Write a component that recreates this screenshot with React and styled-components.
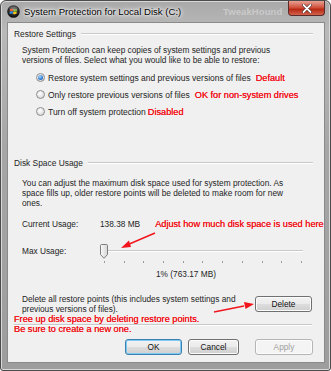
import React from "react";
import styled, { createGlobalStyle } from "styled-components";

const Global = createGlobalStyle`
  html, body { margin: 0; padding: 0; background: #ffffff; }
  body { width: 331px; height: 371px; overflow: hidden; }
  * { box-sizing: border-box; }
`;

const UI_FONT = `"Liberation Sans", Arial, sans-serif`;
const RED_FONT = `"Liberation Sans", Arial, sans-serif`;

const Window = styled.div`
  position: relative;
  width: 331px;
  height: 371px;
  display: flex;
  flex-direction: column;
  border: 1px solid #4b4b4b;
  border-radius: 6px 6px 3px 3px;
  background: linear-gradient(180deg, #a9a9a9 0%, #b9b9b9 8%, #a6a6a6 40%, #9d9d9d 100%);
  box-shadow: inset 0 0 0 1px #d9d9d9;
  font-family: ${UI_FONT};
  color: #1e1e1e;
`;

const TitleBar = styled.div`
  position: relative;
  height: 21px;
  flex: none;
  display: flex;
  align-items: center;
  padding: 0 0 0 6px;
  gap: 4px;
`;

const TitleText = styled.span`
  font-size: 9.6px;
  color: #000;
  text-shadow: 0 0 6px #ffffff, 0 0 4px #ffffff, 0 0 2px #ffffff;
  white-space: nowrap;
`;

const Watermark = styled.span`
  position: absolute;
  left: 222px;
  top: 5px;
  font-size: 9.5px;
  line-height: 11px;
  font-weight: bold;
  color: #cacaca;
  letter-spacing: 0.1px;
`;

const CloseButton = styled.div`
  position: absolute;
  top: 0;
  right: 5px;
  width: 37px;
  height: 15px;
  border: 1px solid #5a2b2b;
  border-top: none;
  border-radius: 0 0 4px 4px;
  background: linear-gradient(180deg, #e8a194 0%, #d2543f 45%, #b92a14 60%, #d2634d 100%);
  display: flex;
  align-items: center;
  justify-content: center;
`;

const Client = styled.div`
  flex: 1;
  margin: 0 5px 7px 6px;
  border: 1px solid #8a8a8a;
  background: #f0f0f0;
  display: flex;
  flex-direction: column;
  position: relative;
`;

const SectionHeader = styled.div`
  display: flex;
  align-items: center;
  height: 12px;
  margin: ${(p) => p.$mt}px 11px 0 6px;
  font-size: 8.4px;
  gap: 5px;
  white-space: nowrap;
  &::after {
    content: "";
    flex: 1;
    height: 1px;
    background: #c9c9c9;
    border-bottom: 1px solid #ffffff;
  }
`;

const Para = styled.p`
  margin: ${(p) => p.$mt}px 35px 0 14px;
  font-size: 8.3px;
  line-height: 10px;
`;

const RadioList = styled.div`
  display: flex;
  flex-direction: column;
  margin: 4px 0 0 28px;
`;

const RadioRow = styled.label`
  display: flex;
  align-items: center;
  height: 17px;
  font-size: 8.5px;
  white-space: nowrap;
`;

const RadioDot = styled.span`
  width: 9px;
  height: 9px;
  border-radius: 50%;
  border: 1px solid #8d8d8d;
  background: radial-gradient(circle at 40% 35%, #ffffff 0%, #e2e2e2 60%, #c9c9c9 100%);
  display: flex;
  align-items: center;
  justify-content: center;
  margin-right: 3px;
  flex: none;
  &::after {
    content: "";
    width: 5px;
    height: 5px;
    border-radius: 50%;
    background: ${(p) =>
      p.$checked ? "radial-gradient(circle at 40% 35%, #a8d8ff 0%, #2e7bd0 60%, #10407a 100%)" : "transparent"};
  }
`;

const RedNote = styled.span`
  color: #f2141c;
  font-family: ${RED_FONT};
  font-size: 9.2px;
  text-shadow: 0 0 0.3px #f2141c;
  margin-left: ${(p) => p.$ml || 4}px;
`;

const UsageRow = styled.div`
  display: flex;
  align-items: center;
  height: 12px;
  margin: ${(p) => p.$mt}px 0 0 14px;
  font-size: 8.3px;
  white-space: nowrap;
`;

const UsageLabel = styled.span`
  width: 78px;
  flex: none;
`;

const SliderRow = styled.div`
  display: flex;
  align-items: center;
  height: 16px;
  margin: ${(p) => p.$mt}px 0 0 14px;
  font-size: 8.3px;
`;

const SliderTrack = styled.div`
  position: relative;
  width: 203px;
  height: 16px;
  display: flex;
  align-items: center;
  &::before {
    content: "";
    position: absolute;
    left: 3px;
    right: 0;
    top: 7px;
    height: 1px;
    background: #c8c8c8;
    border-bottom: 1px solid #ffffff;
  }
`;

const Thumb = styled.svg`
  position: relative;
  z-index: 1;
  flex: none;
`;

const Ticks = styled.div`
  display: flex;
  justify-content: space-between;
  width: 198px;
  height: 4px;
  margin: 2px 0 0 96px;
  & > span {
    width: 1px;
    height: 2px;
    background: #9c9c9c;
  }
`;

const Centered = styled.div`
  height: 12px;
  line-height: 12px;
  font-size: 8.3px;
  margin: ${(p) => p.$mt}px 0 0 148px;
`;

const DeleteRow = styled.div`
  display: flex;
  align-items: center;
  justify-content: space-between;
  margin: ${(p) => p.$mt}px 12px 0 14px;
`;

const DeleteText = styled.div`
  font-size: 8.3px;
  line-height: 10px;
  width: 225px;
`;

const Button = styled.div`
  width: ${(p) => p.$w || 57}px;
  height: 16px;
  flex: none;
  border: 1px solid ${(p) => (p.$disabled ? "#b5b5b5" : p.$default ? "#3c7fb1" : "#707070")};
  border-radius: 3px;
  background: ${(p) =>
    p.$disabled ? "#f4f4f4" : "linear-gradient(180deg, #f2f2f2 0%, #ebebeb 48%, #dddddd 52%, #cfcfcf 100%)"};
  box-shadow: ${(p) => (p.$default ? "inset 0 0 0 1px #7ecbf1" : "inset 0 0 0 1px #fcfcfc")};
  color: ${(p) => (p.$disabled ? "#a0a0a0" : "#111")};
  font-size: 8.3px;
  display: flex;
  align-items: center;
  justify-content: center;
`;

const RedBlock = styled.div`
  color: #f2141c;
  font-family: ${RED_FONT};
  font-size: 9.2px;
  line-height: 10px;
  text-shadow: 0 0 0.3px #f2141c;
  margin: ${(p) => p.$mt}px 0 0 6px;
  white-space: nowrap;
`;

const Separator = styled.div`
  height: 2px;
  margin: 0 12px 0 6px;
  border-top: 1px solid #c9c9c9;
  border-bottom: 1px solid #ffffff;
`;

const ButtonBar = styled.div`
  display: flex;
  gap: 6px;
  margin: ${(p) => p.$mt}px 12px 0 117px;
  & > :last-child { margin-left: 10px; }
`;

const Overlay = styled.svg`
  position: absolute;
  left: 0;
  top: 0;
  pointer-events: none;
`;

function WinOrb() {
  return (
    <svg width="13" height="13" viewBox="0 0 13 13">
      <defs>
        <radialGradient id="orb" cx="50%" cy="35%" r="60%">
          <stop offset="0%" stopColor="#6a6a6a" />
          <stop offset="100%" stopColor="#0c0c0c" />
        </radialGradient>
      </defs>
      <circle cx="6.5" cy="6.5" r="6.3" fill="url(#orb)" />
      <path d="M3 4.2 Q4.6 3.4 6.2 4 L6 6.2 Q4.4 5.6 2.8 6.4 Z" fill="#f04a1c" />
      <path d="M6.6 4.1 Q8.2 4.8 10 3.9 L9.8 6.2 Q8 7 6.4 6.3 Z" fill="#7cc43a" />
      <path d="M2.7 6.8 Q4.3 6 5.9 6.6 L5.7 8.8 Q4.1 8.2 2.5 9 Z" fill="#2c8fe0" />
      <path d="M6.3 6.7 Q7.9 7.4 9.7 6.5 L9.5 8.8 Q7.7 9.6 6.1 8.9 Z" fill="#f7c51c" />
      <ellipse cx="6.5" cy="3.6" rx="4" ry="2.2" fill="#ffffff" opacity="0.18" />
    </svg>
  );
}

export default function App() {
  const ticks = Array.from({ length: 11 });
  return (
    <>
      <Global />
      <Window>
        <TitleBar>
          <WinOrb />
          <TitleText>System Protection for Local Disk (C:)</TitleText>
          <Watermark>TweakHound</Watermark>
          <CloseButton>
            <svg width="10" height="9" viewBox="0 0 10 9">
              <path d="M1.5 1 L8.5 8 M8.5 1 L1.5 8" stroke="#3a1a1a" strokeWidth="3" strokeLinecap="round" />
              <path d="M1.5 1 L8.5 8 M8.5 1 L1.5 8" stroke="#ffffff" strokeWidth="1.8" strokeLinecap="round" />
            </svg>
          </CloseButton>
        </TitleBar>
        <Client>
          <SectionHeader $mt={5}>Restore Settings</SectionHeader>
          <Para $mt={5}>
            System Protection can keep copies of system settings and previous versions of files. Select what you would like to be able to restore:
          </Para>
          <RadioList>
            <RadioRow>
              <RadioDot $checked />
              Restore system settings and previous versions of files
              <RedNote $ml={5}>Default</RedNote>
            </RadioRow>
            <RadioRow>
              <RadioDot />
              Only restore previous versions of files
              <RedNote $ml={5}>OK for non-system drives</RedNote>
            </RadioRow>
            <RadioRow>
              <RadioDot />
              Turn off system protection
              <RedNote $ml={2}>Disabled</RedNote>
            </RadioRow>
          </RadioList>
          <SectionHeader $mt={37}>Disk Space Usage</SectionHeader>
          <Para $mt={9}>
            You can adjust the maximum disk space used for system protection. As space fills up, older restore points will be deleted to make room for new ones.
          </Para>
          <UsageRow $mt={10}>
            <UsageLabel>Current Usage:</UsageLabel>
            138.38 MB
            <RedNote $ml={15}>Adjust how much disk space is used here</RedNote>
          </UsageRow>
          <SliderRow $mt={13}>
            <UsageLabel>Max Usage:</UsageLabel>
            <SliderTrack>
              <Thumb width="8" height="15" viewBox="0 0 8 15">
                <defs>
                  <linearGradient id="th" x1="0" x2="1">
                    <stop offset="0%" stopColor="#fafafa" />
                    <stop offset="100%" stopColor="#d6d6d6" />
                  </linearGradient>
                </defs>
                <path d="M0.5 1.5 Q0.5 0.5 1.5 0.5 L6.5 0.5 Q7.5 0.5 7.5 1.5 L7.5 10.5 L4 14.3 L0.5 10.5 Z" fill="url(#th)" stroke="#7d7d7d" />
              </Thumb>
            </SliderTrack>
          </SliderRow>
          <Ticks>
            {ticks.map((_, i) => (
              <span key={i} />
            ))}
          </Ticks>
          <Centered $mt={3}>1% (763.17 MB)</Centered>
          <DeleteRow $mt={14}>
            <DeleteText>
              Delete all restore points (this includes system settings and previous versions of files).
            </DeleteText>
            <Button>Delete</Button>
          </DeleteRow>
          <RedBlock $mt={0}>Free up disk space by deleting restore points.</RedBlock>
          <Separator />
          <RedBlock $mt={-2}>Be sure to create a new one.</RedBlock>
          <ButtonBar $mt={5}>
            <Button $default>OK</Button>
            <Button $w={51}>Cancel</Button>
            <Button $w={58} $disabled>Apply</Button>
          </ButtonBar>
          <Overlay width="318" height="340" viewBox="0 0 318 340">
            <path d="M147 210 L119 222" stroke="#f2141c" strokeWidth="1.4" />
            <path d="M113 225 L121 217.5 L123 224 Z" fill="#f2141c" />
            <path d="M206 289 L236 283" stroke="#f2141c" strokeWidth="1.4" />
            <path d="M246 281 L236 279 L237.5 286 Z" fill="#f2141c" />
          </Overlay>
        </Client>
      </Window>
    </>
  );
}
